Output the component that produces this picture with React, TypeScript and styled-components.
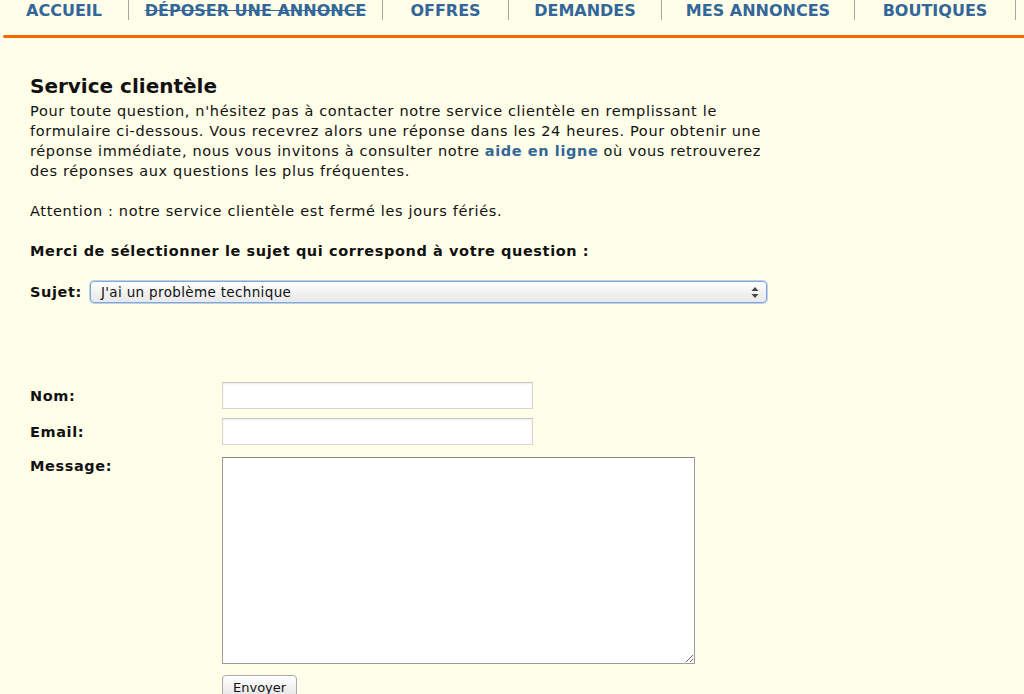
import React from "react";
import styled, { createGlobalStyle } from "styled-components";

const Global = createGlobalStyle`
  html, body { margin: 0; padding: 0; background: #fffee9; }
  body { font-family: "DejaVu Sans", Verdana, sans-serif; color: #111; }
`;

const Page = styled.div`
  width: 1024px;
  height: 694px;
  overflow: hidden;
  background: #fffee9;
`;

const Nav = styled.nav`
  display: flex;
  align-items: stretch;
  height: 20px;
`;

const NavItem = styled.a<{ $w: number; $strike?: boolean }>`
  display: flex;
  align-items: center;
  justify-content: center;
  width: ${(p) => p.$w}px;
  box-sizing: border-box;
  border-right: 1px solid #a8a8a0;
  font-size: 16px;
  font-weight: bold;
  color: #336699;
  text-decoration: ${(p) => (p.$strike ? "line-through" : "none")};
  white-space: nowrap;
  line-height: 20px;
  height: 20px;
  padding-top: 1px;
`;

const OrangeBar = styled.div`
  height: 3px;
  margin: 15px 0 0 3px;
  background: #ff6600;
  border-radius: 2px 0 0 2px;
`;

const Content = styled.main`
  padding: 0 0 0 30px;
`;

const Title = styled.h1`
  margin: 36px 0 3px;
  font-size: 20px;
  line-height: 24px;
  font-weight: bold;
`;

const Para = styled.p<{ $bold?: boolean; $mt?: number }>`
  margin: ${(p) => p.$mt ?? 0}px 0 0;
  font-size: 14.5px;
  line-height: 20px;
  letter-spacing: ${(p) => (p.$bold ? 0.6 : 0.65)}px;
  width: 800px;
  font-weight: ${(p) => (p.$bold ? "bold" : "normal")};
`;

const Link = styled.a`
  color: #336699;
  font-weight: bold;
  letter-spacing: 0.6px;
  text-decoration: none;
`;

const SubjectRow = styled.div`
  display: flex;
  align-items: center;
  gap: 8px;
  margin-top: 20px;
`;

const Label = styled.label`
  font-size: 14.5px;
  letter-spacing: 0.6px;
  font-weight: bold;
  line-height: 20px;
`;

const SelectBox = styled.div`
  position: relative;
  width: 677px;
  height: 22px;
  box-sizing: border-box;
  border: 1px solid #7fa8d4;
  border-radius: 4px;
  box-shadow: 0 0 0 1px #b7d1ee;
  background: linear-gradient(#ffffff, #f1f1f1 55%, #e9e9e9);
  display: flex;
  align-items: center;
  padding-left: 10px;
  font-size: 13.5px;
  letter-spacing: 0.35px;
  color: #111;
`;

const Arrows = styled.svg`
  position: absolute;
  right: 7px;
  top: 5px;
`;

const FormGrid = styled.div`
  display: grid;
  grid-template-columns: 192px auto;
  margin-top: 79px;
  row-gap: 9px;
  align-items: center;
  justify-items: start;
`;

const TopLabel = styled(Label)`
  align-self: start;
  padding-top: 2px;
`;

const TextInput = styled.input`
  width: 311px;
  height: 27px;
  box-sizing: border-box;
  border: 1px solid #d6d6d0;
  border-top-color: #c8c8c2;
  box-shadow: inset 0 1px 2px rgba(0,0,0,0.08);
  background: #fff;
  outline: none;
`;

const TextArea = styled.textarea`
  width: 473px;
  height: 207px;
  box-sizing: border-box;
  border: 1px solid #9c9c9c;
  border-top-color: #888;
  background: #fff;
  margin-top: 3px;
  resize: both;
  outline: none;
`;

const Button = styled.button`
  margin-top: 2px;
  height: 24px;
  padding: 0 10px;
  font-family: "DejaVu Sans", sans-serif;
  font-size: 13px;
  color: #111;
  border: 1px solid #a9a9a9;
  border-radius: 4px;
  background: linear-gradient(#ffffff, #f0f0f0 60%, #e4e4e4);
`;

export default function App() {
  return (
    <Page>
      <Global />
      <Nav>
        <NavItem $w={129}>ACCUEIL</NavItem>
        <NavItem $w={254} $strike>DÉPOSER UNE ANNONCE</NavItem>
        <NavItem $w={126}>OFFRES</NavItem>
        <NavItem $w={153}>DEMANDES</NavItem>
        <NavItem $w={193}>MES ANNONCES</NavItem>
        <NavItem $w={161}>BOUTIQUES</NavItem>
      </Nav>
      <OrangeBar />
      <Content>
        <Title>Service clientèle</Title>
        <Para>
          Pour toute question, n'hésitez pas à contacter notre service clientèle en remplissant le
          <br />
          formulaire ci-dessous. Vous recevrez alors une réponse dans les 24 heures. Pour obtenir une
          <br />
          réponse immédiate, nous vous invitons à consulter notre <Link href="#">aide en ligne</Link> où vous retrouverez
          <br />
          des réponses aux questions les plus fréquentes.
        </Para>
        <Para $mt={20}>Attention : notre service clientèle est fermé les jours fériés.</Para>
        <Para $mt={20} $bold>Merci de sélectionner le sujet qui correspond à votre question :</Para>
        <SubjectRow>
          <Label>Sujet:</Label>
          <SelectBox>
            J'ai un problème technique
            <Arrows width="8" height="11" viewBox="0 0 8 11">
              <path d="M4 0 L7.5 4 H0.5 Z" fill="#444" />
              <path d="M4 11 L7.5 7 H0.5 Z" fill="#444" />
            </Arrows>
          </SelectBox>
        </SubjectRow>
        <FormGrid>
          <Label>Nom:</Label>
          <TextInput />
          <Label>Email:</Label>
          <TextInput />
          <TopLabel>Message:</TopLabel>
          <TextArea />
          <span />
          <Button>Envoyer</Button>
        </FormGrid>
      </Content>
    </Page>
  );
}
